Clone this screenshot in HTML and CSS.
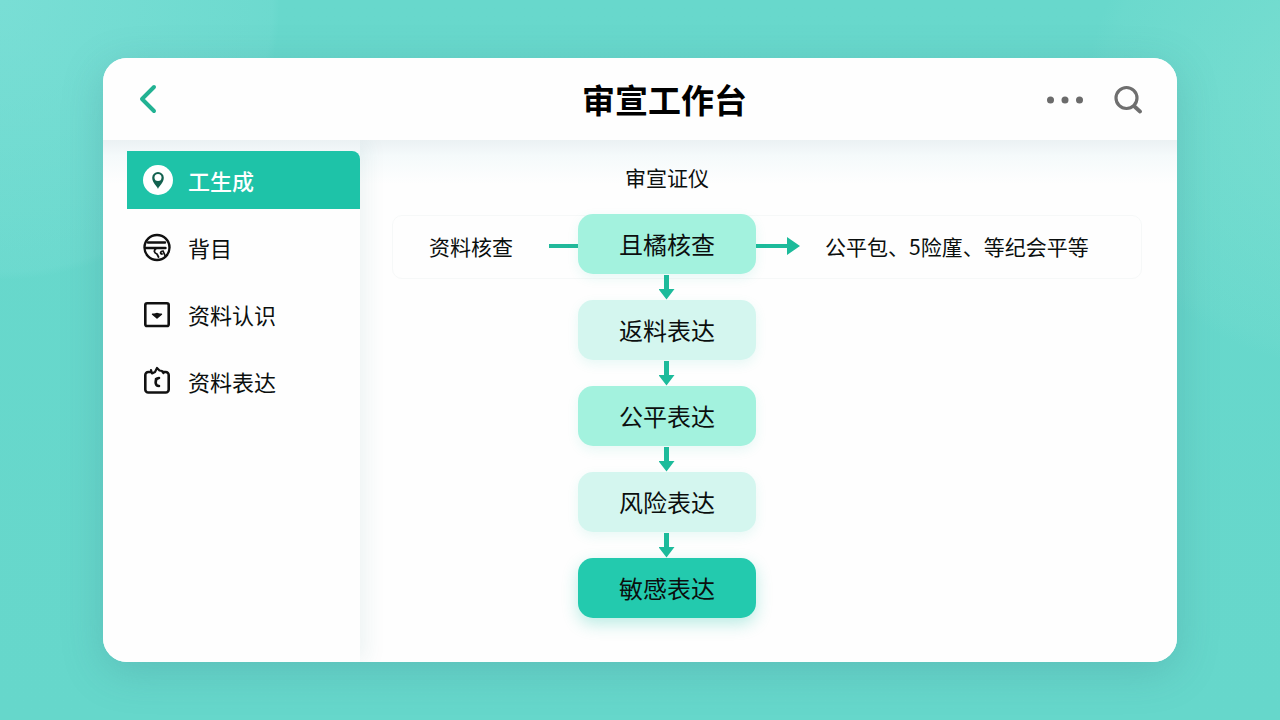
FILE: index.html
```html
<!DOCTYPE html>
<html lang="zh-CN">
<head>
    <meta charset="UTF-8">
    <meta name="viewport" content="width=device-width, initial-scale=1.0">
    <title>审宣工作台</title>
    <link rel="stylesheet" href="styles.css">
</head>
<body>
    <div class="card">
        <header class="header">
            <button class="icon-btn back" type="button" aria-label="返回">
                <svg width="20" height="30" viewBox="0 0 20 30" fill="none" stroke="#22b293" stroke-width="4" stroke-linecap="round" stroke-linejoin="round"><path d="M16 3 4 15 16 27"/></svg>
            </button>
            <h1 class="title">审宣工作台</h1>
            <div class="actions">
                <button class="icon-btn" type="button" aria-label="更多">
                    <svg width="38" height="30" viewBox="0 0 38 30" fill="#6b6b6b"><circle cx="4.500" cy="16" r="3.500"/><circle cx="19" cy="16" r="3.500"/><circle cx="33.500" cy="16" r="3.500"/></svg>
                </button>
                <button class="icon-btn" type="button" aria-label="搜索">
                    <svg width="30" height="30" viewBox="0 0 30 30" fill="none" stroke="#6f6f6f" stroke-width="3.200" stroke-linecap="round"><circle cx="13.500" cy="14" r="10.500"/><path d="m21.500 22.500 5.500 5" stroke-width="3.800"/></svg>
                </button>
            </div>
        </header>

        <div class="body">
            <nav class="sidebar">
                <a class="nav-item active" href="#">
                    <svg width="30" height="30" viewBox="0 0 30 30"><circle cx="15" cy="15" r="15" fill="#fff"/><path d="M15 24c-.8-3-5.800-6-5.800-11.200a5.800 5.800 0 0 1 11.600 0C20.800 18 15.800 21 15 24z" fill="#12614f"/><circle cx="15" cy="12.500" r="3.500" fill="#fff"/></svg>
                    <span>工生成</span>
                </a>
                <a class="nav-item" href="#">
                    <svg width="30" height="30" viewBox="0 0 30 30" fill="none" stroke="#111" stroke-width="2.400" stroke-linecap="round" stroke-linejoin="round"><circle cx="14" cy="15.500" r="12.500"/><path d="M5 10.500h17M3 16h19.500"/><path d="M13 16.500c-2.500 2-2 4.500 1 5.500l1.500 3M18.500 19.500c-1.500 1-1 2.500.5 2.500M20 19l2 4.500" stroke-width="1.800"/></svg>
                    <span>背目</span>
                </a>
                <a class="nav-item" href="#">
                    <svg width="30" height="30" viewBox="0 0 30 30" fill="none" stroke="#111" stroke-width="2.600" stroke-linejoin="round"><rect x="2.300" y="4.300" width="23.400" height="22.700" rx="1.800"/><path d="M9.500 15.300c3 0 3-.8 4.500-.8s1.500.8 4.500.8L14 19z" fill="#111" stroke-width="1.400"/></svg>
                    <span>资料认识</span>
                </a>
                <a class="nav-item" href="#">
                    <svg width="30" height="30" viewBox="0 0 30 30" fill="none" stroke="#111" stroke-width="2.600" stroke-linecap="round" stroke-linejoin="round"><path d="M8 6H5.300a3 3 0 0 0-3 3v14.500a3 3 0 0 0 3 3h17.400a3 3 0 0 0 3-3V9a3 3 0 0 0-3-3H20"/><path d="M8 4l1 3.500L12 6l2-4 2.500 2.500L19 5l1.500 2" stroke-width="2.200"/><path d="M16 12c-4.500.5-4.500 8 0 8M13 13v2" stroke-width="2.600"/></svg>
                    <span>资料表达</span>
                </a>
            </nav>

            <main class="content">
                <h2 class="subtitle">审宣证仪</h2>
                <div class="panel">
                    <div class="source">
                        <span>资料核查</span>
                        <span class="line"></span>
                    </div>
                    <div class="result">
                        <svg width="44" height="20" viewBox="0 0 44 20" fill="#1dbb9b"><path d="M0 8h31V1l13 9-13 9v-7H0z"/></svg>
                        <span>公平包、5险廑、等纪会平等</span>
                    </div>
                </div>
                <ol class="flow">
                    <li class="node mint">且橘核查</li>
                    <li class="arrow"><svg width="16" height="26" viewBox="0 0 16 26"><path d="M5 1h5v14h5.500L7.500 25.500-.5 15H5z"/></svg></li>
                    <li class="node pale">返料表达</li>
                    <li class="arrow"><svg width="16" height="26" viewBox="0 0 16 26"><path d="M5 1h5v14h5.500L7.500 25.500-.5 15H5z"/></svg></li>
                    <li class="node mint">公平表达</li>
                    <li class="arrow"><svg width="16" height="26" viewBox="0 0 16 26"><path d="M5 1h5v14h5.500L7.500 25.500-.5 15H5z"/></svg></li>
                    <li class="node pale">风险表达</li>
                    <li class="arrow"><svg width="16" height="26" viewBox="0 0 16 26"><path d="M5 1h5v14h5.500L7.500 25.500-.5 15H5z"/></svg></li>
                    <li class="node strong">敏感表达</li>
                </ol>
            </main>
        </div>
    </div>
</body>
</html>
```
FILE: styles.css
```css
* {
    box-sizing: border-box;
}
body {
    margin: 0;
    min-height: 100vh;
    padding: 58px 103px;
    display: flex;
    font-family: "Noto Sans CJK SC", sans-serif;
    color: #0b0f0e;
    background:
        radial-gradient(circle at 0 0, rgba(138, 228, 222, 0.5) 0, rgba(138, 228, 222, 0.15) 272px, rgba(138, 228, 222, 0) 280px),
        radial-gradient(circle at 105% 15%, rgba(138, 228, 214, 0.5) 0, rgba(138, 228, 214, 0.1) 240px, rgba(138, 228, 214, 0) 260px),
        linear-gradient(#68d8cc, #66d7cb);
}
.card {
    flex: 1;
    display: flex;
    flex-direction: column;
    background: #fefefe;
    border-radius: 24px;
    overflow: hidden;
    box-shadow: 0 10px 40px rgba(60, 120, 130, 0.25);
}
.header {
    position: relative;
    display: grid;
    grid-template-columns: 1fr auto 1fr;
    align-items: center;
    height: 82px;
    padding: 0 34px 0 35px;
    background: #fefefe;
}
.icon-btn {
    display: block;
    padding: 2px 0 0;
    border: none;
    background: none;
    cursor: pointer;
}
.back {
    justify-self: start;
}
.title {
    margin: 0;
    padding-left: 48px;
    font-size: 33px;
    line-height: 48px;
    font-weight: 700;
    color: #000;
}
.actions {
    display: flex;
    justify-content: flex-end;
    gap: 29px;
}
.body {
    flex: 1;
    display: flex;
    background: linear-gradient(#ebf1f3, #f5fafb 16px, #fefefe 44px);
}
.sidebar {
    width: 257px;
    padding: 11px 0 0 24px;
    display: flex;
    flex-direction: column;
    gap: 9px;
    box-shadow: 6px 0 20px rgba(40, 110, 115, 0.08);
}
.nav-item {
    display: flex;
    align-items: center;
    gap: 15px;
    height: 58px;
    padding-left: 16px;
    font-size: 22px;
    color: inherit;
    text-decoration: none;
}
.nav-item.active {
    color: #fff;
    font-weight: 500;
    background: #1ec3a8;
    border-radius: 0 8px 0 0;
}
.content {
    flex: 1;
    display: grid;
    grid-template-columns: 186px 178px 1fr;
    grid-template-rows: 74px 65px auto;
    padding: 0 35px 43px 32px;
}
.subtitle {
    grid-column: 2;
    margin: 0;
    padding-top: 21px;
    font-size: 21px;
    line-height: 32px;
    font-weight: 400;
    text-align: center;
}
.panel {
    grid-column: 1 / -1;
    grid-row: 2;
    margin-top: 1px;
    padding-bottom: 2px;
    display: flex;
    justify-content: space-between;
    border: 1px solid #f6f8f8;
    border-radius: 10px;
    font-size: 21px;
}
.source {
    width: 186px;
    padding-left: 36px;
    display: flex;
    align-items: center;
    justify-content: space-between;
}
.line {
    width: 30px;
    height: 4px;
    background: #22b99b;
}
.result {
    width: calc(100% - 363px);
    display: flex;
    align-items: center;
    gap: 25px;
}
.flow {
    grid-column: 2;
    grid-row: 2 / 4;
    margin: 0;
    padding: 0;
    list-style: none;
}
.node {
    height: 60px;
    border-radius: 15px;
    font-size: 24px;
    line-height: 60px;
    text-align: center;
    box-shadow: 0 4px 12px rgba(30, 195, 168, 0.1);
}
.mint {
    background: #a3f2de;
}
.pale {
    background: #d4f6ef;
}
.strong {
    background: #23caae;
    box-shadow: 0 6px 16px rgba(30, 195, 168, 0.3);
}
.arrow {
    display: flex;
    justify-content: center;
    height: 26px;
}
.arrow svg {
    fill: #1dbb9b;
}
```
